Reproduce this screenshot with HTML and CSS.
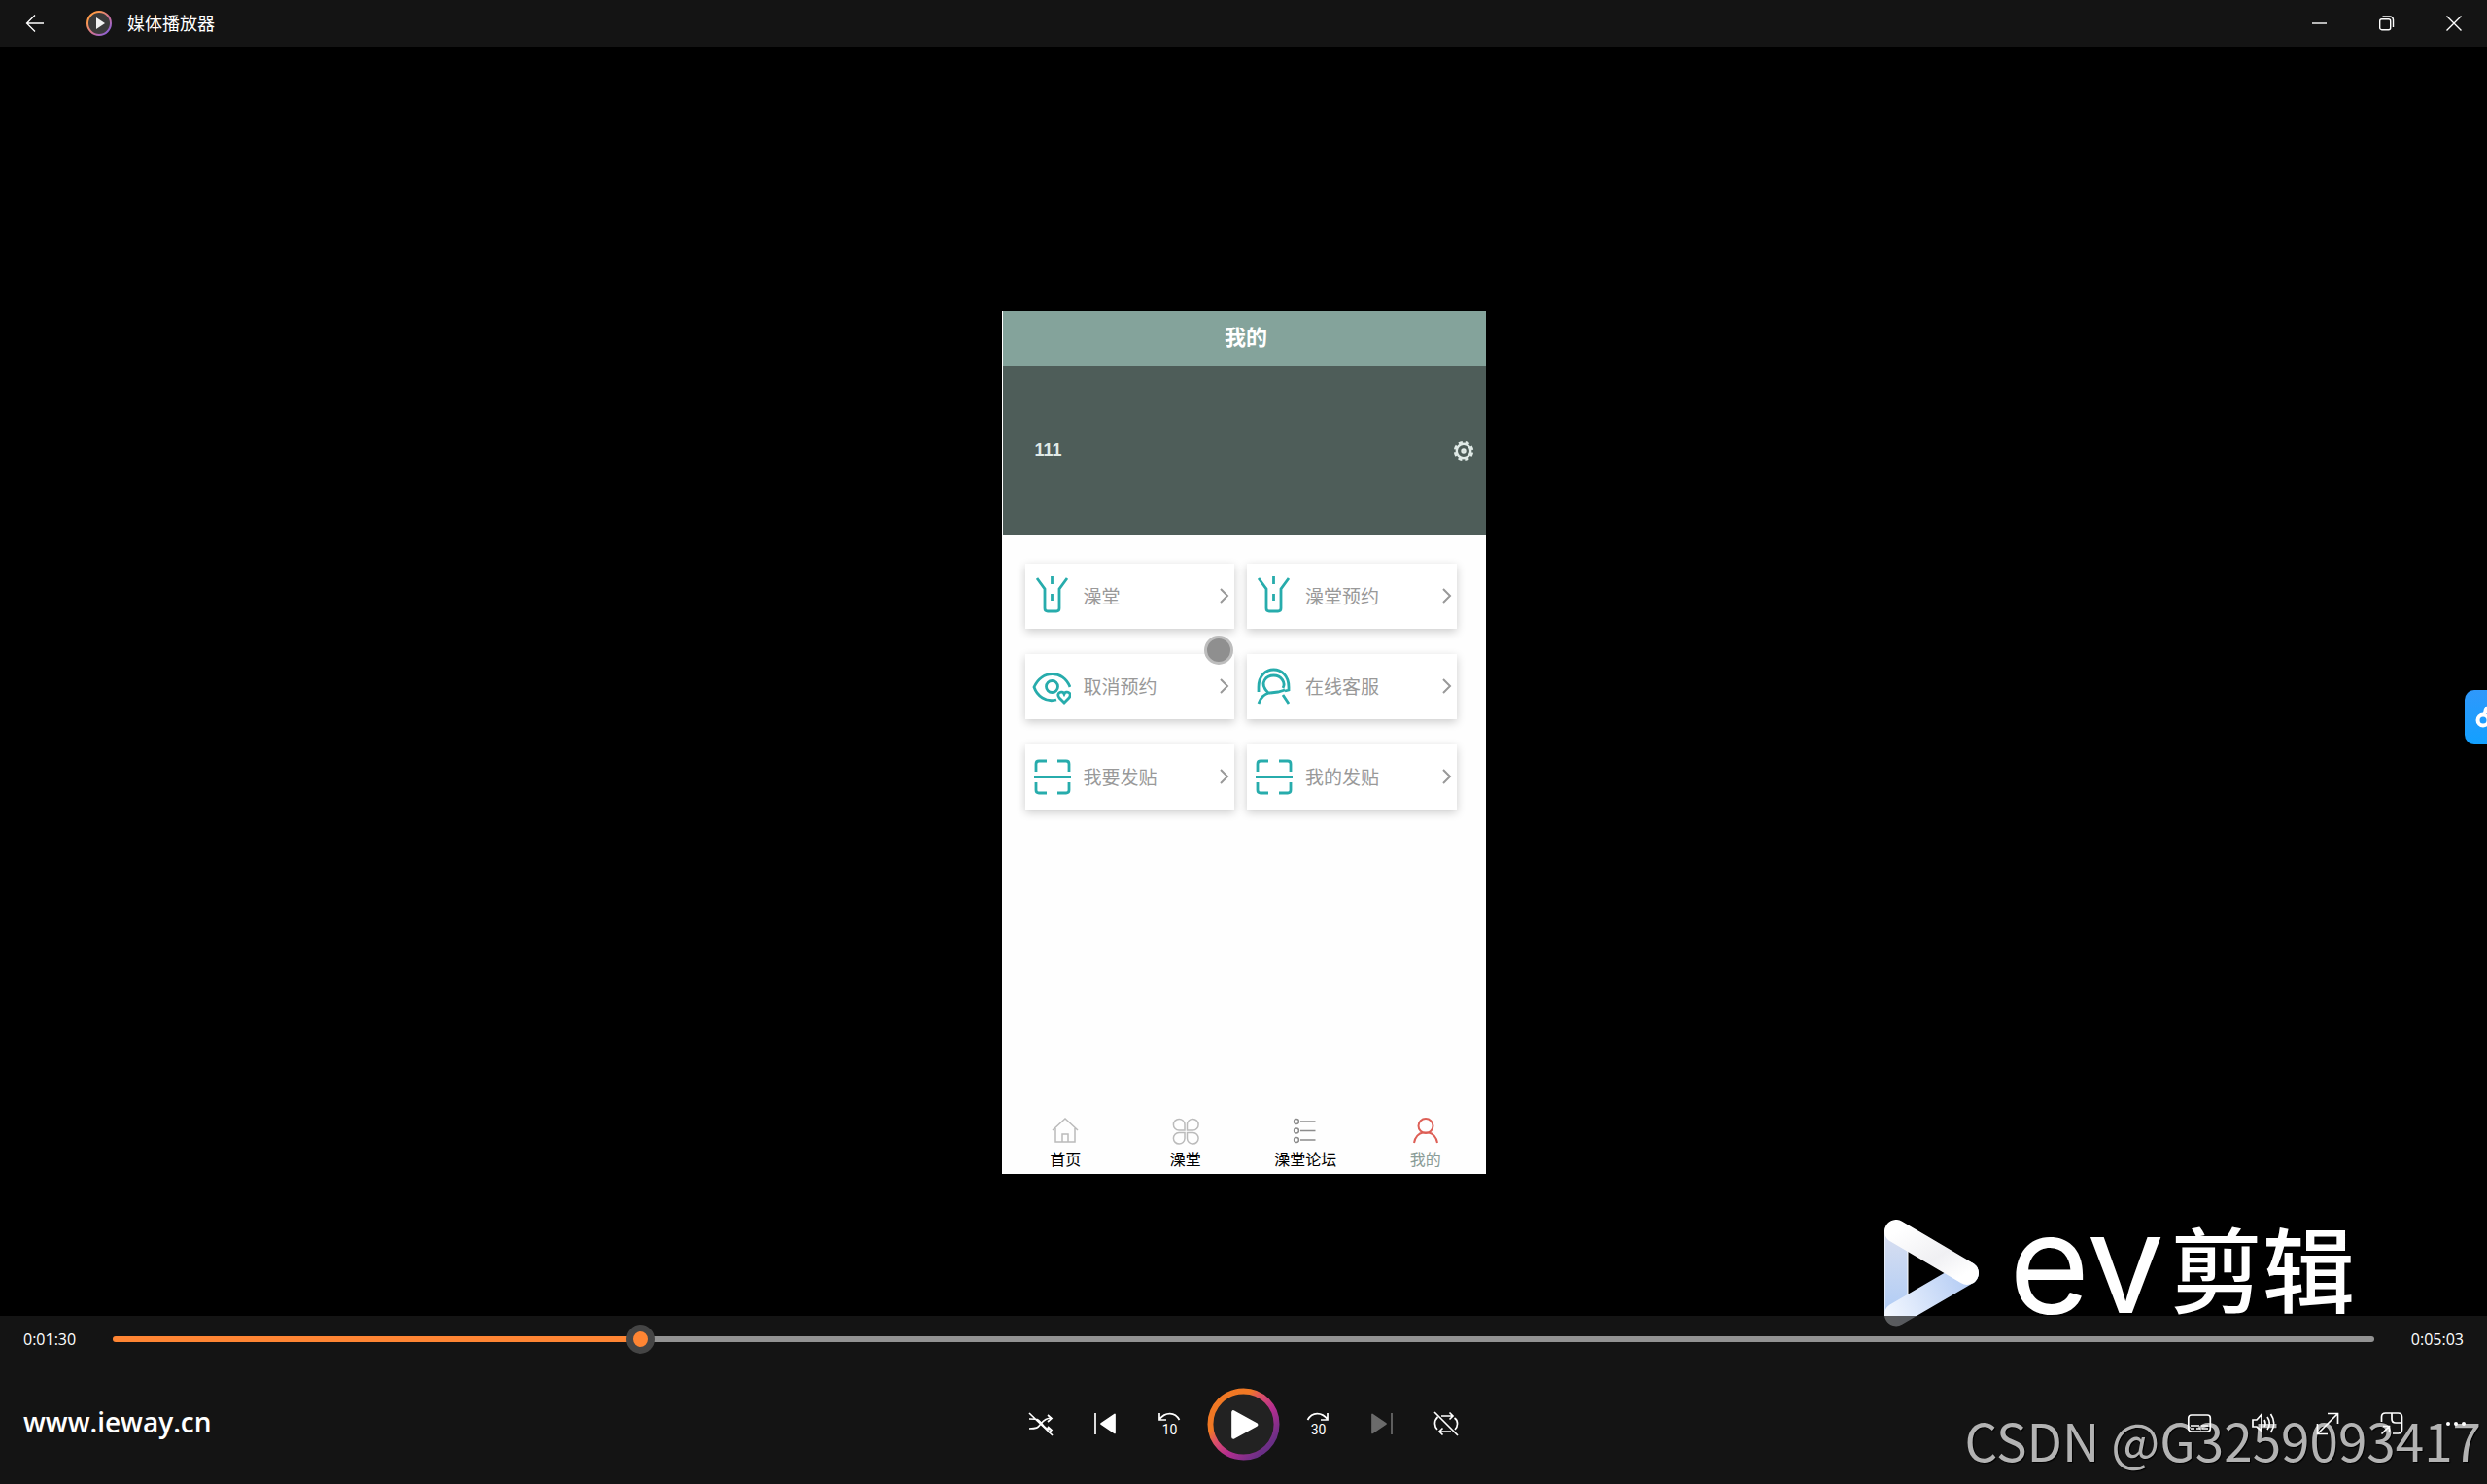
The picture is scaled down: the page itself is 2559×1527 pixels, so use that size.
FILE: index.html
```html
<!DOCTYPE html>
<html lang="zh-CN">

<head>
    <meta charset="UTF-8">
    <meta name="viewport" content="width=device-width, initial-scale=1.0">
    <title>媒体播放器</title>
    <link rel="stylesheet" href="styles.css">
</head>

<body>
    <div class="player">

        <!-- title bar -->
        <header class="titlebar">
            <button class="back" type="button" aria-label="返回">
                <svg width="20" height="20" viewBox="0 0 20 20"><path d="M19 10H1.500M10 1.500L1.500 10l8.500 8.500" /></svg>
            </button>
            <svg class="app-logo" width="28" height="28" viewBox="0 0 28 28">
                <defs>
                    <linearGradient id="logoRing" x1="0" y1="0" x2="1" y2="1">
                        <stop offset="0.200" stop-color="#ff9a4a" />
                        <stop offset="0.600" stop-color="#c9709c" />
                        <stop offset="0.900" stop-color="#8a5fd6" />
                    </linearGradient>
                </defs>
                <circle cx="14" cy="14" r="12" fill="#3a3a3a" stroke="url(#logoRing)" stroke-width="2" />
                <path d="M11 8v12l9-6z" fill="#f2f2f2" stroke="none" />
            </svg>
            <h1>媒体播放器</h1>
            <div class="window-buttons">
                <button type="button" aria-label="最小化">
                    <svg width="16" height="16" viewBox="0 0 16 16"><path d="M0 8h15" /></svg>
                </button>
                <button type="button" aria-label="还原">
                    <svg width="16" height="16" viewBox="0 0 16 16"><rect x="0.700" y="3.700" width="11" height="11" rx="2" /><path d="M3.500 1H11a3.500 3.500 0 0 1 3.500 3.500V12" /></svg>
                </button>
                <button type="button" aria-label="关闭">
                    <svg width="16" height="16" viewBox="0 0 16 16"><path d="M0.500 0.500l15 15M15.500 0.500l-15 15" /></svg>
                </button>
            </div>
        </header>

        <!-- video picture -->
        <main class="video">
            <div class="phone">
                <h2 class="phone-title">我的</h2>
                <div class="banner">
                    <span>111</span>
                    <button type="button" aria-label="设置">
                        <svg width="22" height="22" viewBox="0 0 22 22">
                            <circle cx="11" cy="11" r="7.200" />
                            <circle cx="11" cy="11" r="9" stroke-dasharray="4.100 2.968" stroke-dashoffset="-1.500" />
                            <circle cx="11" cy="11" r="1.500" />
                        </svg>
                    </button>
                </div>

                <div class="cards">
                    <a class="card" href="#">
                        <svg class="card-icon" viewBox="0 0 40 40"><path d="M5 2l8 11v20q0 3 3 3h9q3 0 3-3V13l8-11M20.500 0v8M20.500 18v7" /></svg>
                        <span>澡堂</span>
                        <svg class="chevron" viewBox="0 0 10 16"><path d="M1 1l7 7-7 7" /></svg>
                    </a>
                    <a class="card" href="#">
                        <svg class="card-icon" viewBox="0 0 40 40"><path d="M5 2l8 11v20q0 3 3 3h9q3 0 3-3V13l8-11M20.500 0v8M20.500 18v7" /></svg>
                        <span>澡堂预约</span>
                        <svg class="chevron" viewBox="0 0 10 16"><path d="M1 1l7 7-7 7" /></svg>
                    </a>
                    <a class="card" href="#">
                        <svg class="card-icon" viewBox="0 0 40 40"><path d="M25 34C14 37 5 30 2 21 10 3 32 3 39 21M33 37l-5-5c-4-5 3-8 5-4 2-4 9-1 5 4z" /><circle cx="20.500" cy="20.500" r="6" /></svg>
                        <span>取消预约</span>
                        <svg class="chevron" viewBox="0 0 10 16"><path d="M1 1l7 7-7 7" /></svg>
                    </a>
                    <a class="card" href="#">
                        <svg class="card-icon" viewBox="0 0 40 40"><path d="M5 26v-5C5-3 36-3 36 21v3l-4 1M5 38c2-6 6-10 11-11M30 29l6 9M17 27h-2C4 16 14 9 20.500 9 29 9 33 17 30 22M17 27l8-1 7-2" /></svg>
                        <span>在线客服</span>
                        <svg class="chevron" viewBox="0 0 10 16"><path d="M1 1l7 7-7 7" /></svg>
                    </a>
                    <a class="card" href="#">
                        <svg class="card-icon" viewBox="0 0 40 40"><path d="M4 15V7q0-3 3-3h8M26 4h9q3 0 3 3v8M2 20.500h38M4 26v8q0 3 3 3h8M26 37h9q3 0 3-3v-8" /></svg>
                        <span>我要发贴</span>
                        <svg class="chevron" viewBox="0 0 10 16"><path d="M1 1l7 7-7 7" /></svg>
                    </a>
                    <a class="card" href="#">
                        <svg class="card-icon" viewBox="0 0 40 40"><path d="M4 15V7q0-3 3-3h8M26 4h9q3 0 3 3v8M2 20.500h38M4 26v8q0 3 3 3h8M26 37h9q3 0 3-3v-8" /></svg>
                        <span>我的发贴</span>
                        <svg class="chevron" viewBox="0 0 10 16"><path d="M1 1l7 7-7 7" /></svg>
                    </a>
                    <div class="touch"></div>
                </div>

                <nav class="tabs">
                    <a href="#">
                        <svg viewBox="0 0 28 28"><path d="M1 13L14 1l13 12M4 11v14h20V11M11 25v-8h6v8" /></svg>
                        首页
                    </a>
                    <a href="#">
                        <svg viewBox="0 0 28 28"><path d="M13 13H7a5.800 5.800 0 1 1 6-6zM15.500 13V7a5.800 5.800 0 1 1 6 6zM13 15.500v6a5.800 5.800 0 1 1-6-6zM15.500 15.500h6a5.800 5.800 0 1 1-6 6z" /></svg>
                        澡堂
                    </a>
                    <a href="#">
                        <svg viewBox="0 0 28 28"><g stroke="#8c8c8c"><circle cx="5" cy="4" r="2.400" /><circle cx="5" cy="13.500" r="2.400" /><circle cx="5" cy="23" r="2.400" /><path d="M9 4h15.500M9 13.500h15.500M9 23h15.500" /></g></svg>
                        澡堂论坛
                    </a>
                    <a class="active" href="#">
                        <svg viewBox="0 0 28 28"><circle cx="14" cy="8.500" r="7.500" /><path d="M2 26c1-6 5-10 9-10.500h6c4 .5 8 4.500 9 10.500" /></svg>
                        我的
                    </a>
                </nav>
            </div>

            <div class="ev-logo">
                <svg width="98" height="110" viewBox="0 0 98 110">
                    <defs>
                        <linearGradient id="evLeft" x1="0" y1="0" x2="0" y2="1">
                            <stop offset="0" stop-color="#d9dff0" />
                            <stop offset="1" stop-color="#b0ccf5" />
                        </linearGradient>
                        <linearGradient id="evBottom" gradientUnits="userSpaceOnUse" x1="0" y1="100" x2="85" y2="60">
                            <stop offset="0" stop-color="#f4f8ff" />
                            <stop offset="1" stop-color="#b4ccf4" />
                        </linearGradient>
                        <linearGradient id="evTop" x1="0" y1="0" x2="1" y2="1">
                            <stop offset="0" stop-color="#ffffff" />
                            <stop offset="0.600" stop-color="#f0f0f3" />
                            <stop offset="1" stop-color="#ffffff" />
                        </linearGradient>
                    </defs>
                    <path d="M0 12h24v84H0z" fill="url(#evLeft)" />
                    <path d="M12 97.500L85 55" stroke="url(#evBottom)" stroke-width="24" stroke-linecap="round" />
                    <path d="M12 12l73 43" stroke="url(#evTop)" stroke-width="24" stroke-linecap="round" />
                </svg>
                <span class="ev-latin">ev</span>
                <span class="ev-han">剪辑</span>
            </div>

            <button class="side-tab" type="button" aria-label="网盘">
                <svg width="23" height="56" viewBox="0 0 23 56"><circle cx="19" cy="31" r="5.500" /><path d="M21 24c0-4 3-7 7-7" /></svg>
            </button>
        </main>

        <!-- playback controls -->
        <footer class="controls">
            <div class="timeline">
                <span>0:01:30</span>
                <input type="range" min="0" max="1000" value="230" aria-label="进度" style="--played: 23%">
                <span>0:05:03</span>
            </div>
            <div class="csdn">CSDN @G3259093417</div>
            <div class="buttons">
                <span class="site">www.ieway.cn</span>
                <div class="group">
                    <button type="button" aria-label="随机播放">
                        <svg viewBox="0 0 24 24"><path d="M0 1l24 23M0 7c10 0 9 0 13 5 3 4 5 6 10 6M0 17c10 0 9-2 12-5 3-4 6-6 11-6M19 3l4 3.500-4 3.500M19 15l4 3.500-3 3" /></svg>
                    </button>
                    <button type="button" aria-label="上一个">
                        <svg viewBox="0 0 24 24"><path d="M2 1v22" /><path class="solid" d="M22 2.500v19L8 12z" /></svg>
                    </button>
                    <button type="button" aria-label="后退 10 秒">
                        <svg viewBox="0 0 24 24"><path d="M2 1v7h7M2 7.500C8-.5 18-.5 22.500 8" /><text x="12.500" y="22.500">10</text></svg>
                    </button>
                    <button class="play" type="button" aria-label="播放">
                        <svg viewBox="0 0 76 76">
                            <defs>
                                <linearGradient id="playRing" x1="0" y1="0" x2="1" y2="1">
                                    <stop offset="0.300" stop-color="#f07824" />
                                    <stop offset="0.420" stop-color="#dc5068" />
                                    <stop offset="0.600" stop-color="#b52e90" />
                                    <stop offset="0.850" stop-color="#6a2f86" />
                                </linearGradient>
                            </defs>
                            <circle cx="38" cy="38" r="34.500" fill="#222" stroke="url(#playRing)" stroke-width="6" />
                            <path class="solid" d="M27.500 25.500v26L51 38.500z" stroke-width="4" />
                        </svg>
                    </button>
                    <button type="button" aria-label="前进 30 秒">
                        <svg viewBox="0 0 24 24"><path d="M22 1v7h-7M22 7.500C16-.5 6-.5 1.500 8" /><text x="12.500" y="22.500">30</text></svg>
                    </button>
                    <button type="button" aria-label="下一个" disabled>
                        <svg viewBox="0 0 24 24"><path d="M22 1v22" /><path class="solid" d="M2 2.500v19L16 12z" /></svg>
                    </button>
                    <button type="button" aria-label="重复">
                        <svg viewBox="0 0 24 24"><path d="M0 0l24 24M7 4h12M15.500 0.500L19 4l-3.500 3.500M17 20H5M8.500 16.500L5 20l3.500 3.500M3.500 5C-1 9 0 15 3 18M20.500 6C25 9 24 15 21 18" /></svg>
                    </button>
                </div>
                <div class="group right">
                    <button type="button" aria-label="字幕">
                        <svg viewBox="0 0 24 24"><rect x="0.800" y="3" width="22.500" height="17" rx="3" /><path d="M3 14h9M14 14h7M3 17h4M9 17h4M15 17h6" /></svg>
                    </button>
                    <button type="button" aria-label="音量">
                        <svg viewBox="0 0 24 24"><path d="M1 8v7h4l5 4.500v-17L5 8zM13 8q2 3.500 0 7M16 5q4.500 6.500 0 13M19.500 2q6.500 9.500 0 19" /></svg>
                    </button>
                    <button type="button" aria-label="全屏">
                        <svg viewBox="0 0 24 24"><path d="M12 1.500h10.500V12M22.500 1.500l-21 21M1.500 12v10.500H12" /></svg>
                    </button>
                    <button type="button" aria-label="迷你播放器">
                        <svg viewBox="0 0 24 24"><path d="M1.500 10V5q0-4 4-4h13q4 0 4 4v13q0 4-4 4H13M12 1v6q0 4 4 4h6.500M1.500 22.500L9 15M3 14.500h6.500V21" /></svg>
                    </button>
                    <button type="button" aria-label="更多">
                        <svg viewBox="0 0 24 24"><g fill="#fff" stroke="none"><circle cx="4" cy="12" r="2" /><circle cx="12" cy="12" r="2" /><circle cx="20" cy="12" r="2" /></g></svg>
                    </button>
                </div>
            </div>
        </footer>

    </div>
</body>

</html>
```
FILE: styles.css
```css
* {
    box-sizing: border-box;
}

body {
    margin: 0;
    background: #000;
    color: #fff;
    font-family: "Open Sans", "Noto Sans CJK SC", sans-serif;
}

h1,
h2 {
    margin: 0;
}

a {
    color: inherit;
    text-decoration: none;
}

button {
    display: flex;
    align-items: center;
    justify-content: center;
    padding: 0;
    border: none;
    background: transparent;
    color: inherit;
    cursor: pointer;
}

svg {
    display: block;
    flex: none;
    fill: none;
    stroke: currentColor;
}

/* title bar and controls lie over the picture */
.player {
    display: grid;
    grid-template-rows: auto 1fr auto;
    min-height: 100vh;
    overflow: hidden;
}

.titlebar {
    grid-area: 1 / 1;
    z-index: 1;
    display: flex;
    align-items: center;
    height: 48px;
    background: #141414;
}

.titlebar h1 {
    font-size: 18px;
    font-weight: 400;
    line-height: 28px;
    margin-left: 15px;
}

.back {
    width: 72px;
    height: 48px;
}

.back svg {
    stroke-width: 1.3;
}

.app-logo {
    margin-left: 16px;
}

.window-buttons {
    display: flex;
    margin-left: auto;
}

.window-buttons button {
    width: 69px;
    height: 48px;
}

.window-buttons svg {
    stroke-width: 1.4;
}

.video {
    grid-area: 1 / 1 / 4 / 2;
    position: relative;
    display: flex;
    align-items: center;
    justify-content: center;
}

/* phone screen */
.phone {
    display: flex;
    flex-direction: column;
    width: 498px;
    min-height: 888px;
    background: #fefefe;
    border-left: 1px solid #fff;
}

.phone-title {
    background: #84a39b;
    font-family: "Noto Sans CJK SC", sans-serif;
    font-size: 22px;
    line-height: 50px;
    height: 57px;
    padding-left: 4px;
    text-align: center;
}

.banner {
    display: flex;
    align-items: center;
    justify-content: space-between;
    height: 174px;
    padding: 0 12px 0 33px;
    background: #4e5d59;
    color: #e0eae7;
    font-family: "Liberation Sans", sans-serif;
    font-size: 18px;
    font-weight: 700;
}

.banner svg {
    stroke-width: 2.4;
}

.cards {
    position: relative;
    display: grid;
    grid-template-columns: 1fr 1fr;
    gap: 26px 13px;
    padding: 29px 30px 0 23px;
}

.card {
    display: flex;
    align-items: center;
    height: 67px;
    padding: 0 5px 0 7px;
    background: #fff;
    box-shadow: 0 3px 9px rgba(0, 0, 0, 0.2);
    color: #999;
    font-family: "Noto Sans CJK SC", sans-serif;
    font-size: 19px;
    line-height: 26px;
}

.card-icon {
    width: 40px;
    height: 40px;
    margin-right: 13px;
    stroke: #27acac;
    stroke-width: 2.8;
}

.chevron {
    width: 10px;
    height: 16px;
    margin-left: auto;
    stroke-width: 2;
}

.touch {
    position: absolute;
    top: 103px;
    left: 207px;
    width: 30px;
    height: 30px;
    border: 3px solid #bdbdbd;
    border-radius: 50%;
    background: #8f8f8f;
}

.tabs {
    display: grid;
    grid-template-columns: repeat(4, 1fr);
    margin-top: auto;
    padding: 0 0 4px 3px;
    color: #000;
    font-family: "Noto Sans CJK SC", sans-serif;
    font-size: 16px;
    line-height: 24px;
}

.tabs a {
    display: flex;
    flex-direction: column;
    align-items: center;
    gap: 2px;
}

.tabs svg {
    width: 28px;
    height: 28px;
    stroke: #bbb;
    stroke-width: 1.5;
}

.tabs .active {
    color: #8a9c97;
}

.tabs .active svg {
    stroke: #dd5f56;
    stroke-width: 2;
}

/* watermark of the video editor */
.ev-logo {
    position: absolute;
    right: 136px;
    bottom: 162px;
    display: flex;
    align-items: center;
}

.ev-latin {
    margin: 0 0 22px 30px;
    font-family: Inter, sans-serif;
    font-size: 142px;
    line-height: 88px;
}

.ev-han {
    margin: 0 0 14px 6px;
    font-family: "Noto Sans CJK SC", sans-serif;
    font-size: 95px;
    font-weight: 500;
    line-height: 96px;
}

.side-tab {
    position: absolute;
    top: 710px;
    right: 0;
    border-radius: 10px 0 0 10px;
    background: linear-gradient(#2f98fb, #12a0ff);
    overflow: hidden;
}

.side-tab svg {
    stroke-width: 4;
}

.controls {
    grid-area: 3 / 1;
    z-index: 1;
    position: relative;
    height: 173px;
    background: rgba(28, 28, 28, 0.71);
}

.timeline {
    display: flex;
    align-items: center;
    gap: 38px;
    height: 48px;
    padding: 0 24px;
    font-size: 16px;
}

.timeline input {
    flex: 1;
    height: 30px;
    margin: 0;
    appearance: none;
    background: transparent;
}

.timeline input::-webkit-slider-runnable-track {
    height: 6px;
    border-radius: 3px;
    background: linear-gradient(to right, #ff8533 var(--played), #939393 var(--played));
}

.timeline input::-webkit-slider-thumb {
    appearance: none;
    width: 30px;
    height: 30px;
    margin-top: -12px;
    border: 7px solid #454545;
    border-radius: 50%;
    background: #ff8533;
}

.buttons {
    position: relative;
    display: grid;
    grid-template-columns: 1fr auto 1fr;
    align-items: center;
    height: 126px;
}

.site {
    padding: 0 0 4px 24px;
    font-size: 28px;
    font-weight: 600;
}

.group {
    display: flex;
    align-items: center;
    gap: 6px;
}

.right {
    justify-content: flex-end;
    padding-right: 2px;
}

.group button {
    width: 60px;
    height: 60px;
}

.group svg {
    width: 24px;
    height: 24px;
    overflow: visible;
    stroke-width: 1.7;
}

.group text {
    fill: #fff;
    stroke: none;
    font-family: Roboto, sans-serif;
    font-size: 14px;
    text-anchor: middle;
}

.group .solid {
    fill: currentColor;
    stroke-linejoin: round;
}

.group button:disabled {
    color: #6b6b6b;
}

.group .play {
    width: 75px;
    height: 75px;
    margin: 0 3px;
}

.group .play svg {
    width: 75px;
    height: 75px;
}

.csdn {
    position: absolute;
    right: 6px;
    bottom: 8px;
    color: #b3b3b3;
    font-family: "Noto Sans CJK SC", sans-serif;
    font-size: 53px;
    line-height: 76px;
    text-shadow: 1px 1px 1px #000;
}
```
